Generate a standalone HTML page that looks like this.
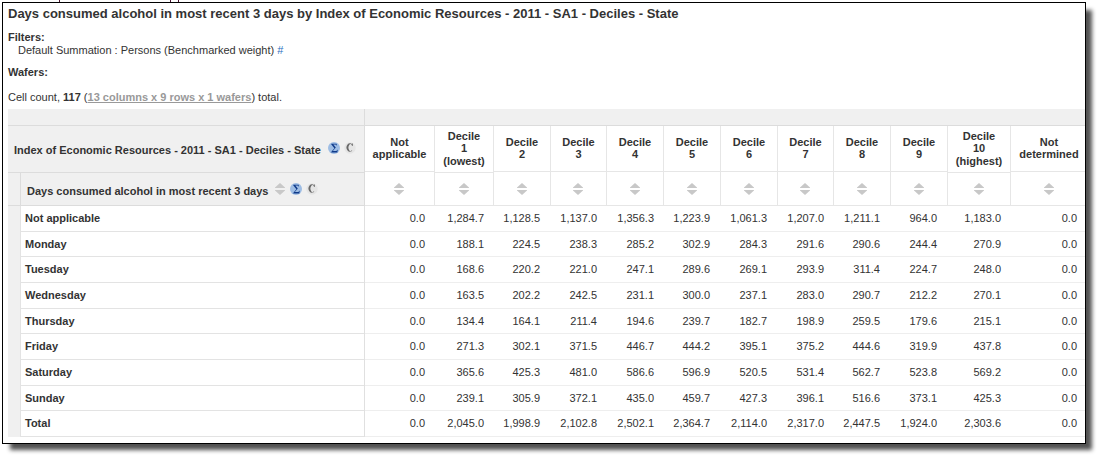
<!DOCTYPE html>
<html><head><meta charset="utf-8"><style>
html,body{margin:0;padding:0;background:#fff;width:1099px;height:456px;overflow:hidden;position:relative}
body div{position:absolute}
#shadow{left:10px;top:10px;width:1081.5px;height:439.5px;background:rgba(0,0,0,0.68);filter:blur(2.3px)}
#frame{left:2px;top:2px;width:1082px;height:440px;border:1px solid #000;background:#fff;}
.t13{font:bold 13px/15px "Liberation Sans",sans-serif;color:#333;white-space:nowrap}
.t11,.t11b,.hd,.num{font:11px/12px "Liberation Sans",sans-serif;color:#333333;white-space:nowrap}
.t11b,.hd{font-weight:bold}
.hd{text-align:center}
.num{text-align:right}
.lnk{color:#2a6fc0}
.gl{color:#999;font-weight:bold;text-decoration:underline}
.ic svg{display:block}
.l3{position:relative;top:1px}
</style></head><body>
<div style="left:59px;top:0px;width:1px;height:2px;background:#4a1030;"></div>
<div style="left:170px;top:0px;width:1px;height:2px;background:#4a1030;"></div>
<div style="left:178px;top:0px;width:1px;height:2px;background:#4a1030;"></div>
<div id="shadow"></div><div id="frame"></div>
<div class="t13" style="left:8px;top:6px;">Days consumed alcohol in most recent 3 days by Index of Economic Resources - 2011 - SA1 - Deciles - State</div>
<div class="t11b" style="left:8px;top:31px;">Filters:</div>
<div class="t11" style="left:18px;top:44px;">Default Summation : Persons (Benchmarked weight) <span class="lnk">#</span></div>
<div class="t11b" style="left:8px;top:66px;">Wafers:</div>
<div class="t11" style="left:8px;top:91px;">Cell count, <b>117</b> (<span class="gl">13 columns x 9 rows x 1 wafers</span>) total.</div>
<div style="left:8px;top:109px;width:1077px;height:328px;background:#f0f0f0;"></div>
<div style="left:365px;top:126px;width:720px;height:79px;background:#ffffff;"></div>
<div style="left:21px;top:206px;width:1064px;height:230px;background:#ffffff;"></div>
<div style="left:8px;top:125px;width:1077px;height:1px;background:#dcdcdc;"></div>
<div style="left:364px;top:109px;width:1px;height:97px;background:#dcdcdc;"></div>
<div style="left:364px;top:206px;width:1px;height:231px;background:#e0e0e0;"></div>
<div style="left:8px;top:172px;width:356px;height:1px;background:#dcdcdc;"></div>
<div style="left:20px;top:173px;width:1px;height:33px;background:#dcdcdc;"></div>
<div style="left:20px;top:206px;width:1px;height:231px;background:#e3e3e3;"></div>
<div style="left:8px;top:205px;width:356px;height:1px;background:#dcdcdc;"></div>
<div style="left:365px;top:205px;width:720px;height:1px;background:#e6e6e6;"></div>
<div style="left:21px;top:231px;width:343px;height:1px;background:#e3e3e3;"></div>
<div style="left:365px;top:231px;width:720px;height:1px;background:#eeeeee;"></div>
<div style="left:21px;top:256px;width:343px;height:1px;background:#e3e3e3;"></div>
<div style="left:365px;top:256px;width:720px;height:1px;background:#eeeeee;"></div>
<div style="left:21px;top:282px;width:343px;height:1px;background:#e3e3e3;"></div>
<div style="left:365px;top:282px;width:720px;height:1px;background:#eeeeee;"></div>
<div style="left:21px;top:308px;width:343px;height:1px;background:#e3e3e3;"></div>
<div style="left:365px;top:308px;width:720px;height:1px;background:#eeeeee;"></div>
<div style="left:21px;top:333px;width:343px;height:1px;background:#e3e3e3;"></div>
<div style="left:365px;top:333px;width:720px;height:1px;background:#eeeeee;"></div>
<div style="left:21px;top:359px;width:343px;height:1px;background:#e3e3e3;"></div>
<div style="left:365px;top:359px;width:720px;height:1px;background:#eeeeee;"></div>
<div style="left:21px;top:385px;width:343px;height:1px;background:#e3e3e3;"></div>
<div style="left:365px;top:385px;width:720px;height:1px;background:#eeeeee;"></div>
<div style="left:21px;top:410px;width:343px;height:1px;background:#e3e3e3;"></div>
<div style="left:365px;top:410px;width:720px;height:1px;background:#eeeeee;"></div>
<div style="left:21px;top:436px;width:343px;height:1px;background:#e3e3e3;"></div>
<div style="left:365px;top:436px;width:720px;height:1px;background:#eeeeee;"></div>
<div style="left:434px;top:126px;width:1px;height:79px;background:#e6e6e6;"></div>
<div style="left:493px;top:126px;width:1px;height:79px;background:#e6e6e6;"></div>
<div style="left:550px;top:126px;width:1px;height:79px;background:#e6e6e6;"></div>
<div style="left:606px;top:126px;width:1px;height:79px;background:#e6e6e6;"></div>
<div style="left:663px;top:126px;width:1px;height:79px;background:#e6e6e6;"></div>
<div style="left:720px;top:126px;width:1px;height:79px;background:#e6e6e6;"></div>
<div style="left:777px;top:126px;width:1px;height:79px;background:#e6e6e6;"></div>
<div style="left:833px;top:126px;width:1px;height:79px;background:#e6e6e6;"></div>
<div style="left:890px;top:126px;width:1px;height:79px;background:#e6e6e6;"></div>
<div style="left:947px;top:126px;width:1px;height:79px;background:#e6e6e6;"></div>
<div style="left:1010px;top:126px;width:1px;height:79px;background:#e6e6e6;"></div>
<div style="left:365px;top:171px;width:69px;height:1px;background:#e6e6e6;"></div>
<div style="left:435px;top:172px;width:58px;height:1px;background:#e6e6e6;"></div>
<div style="left:494px;top:171px;width:56px;height:1px;background:#e6e6e6;"></div>
<div style="left:551px;top:171px;width:55px;height:1px;background:#e6e6e6;"></div>
<div style="left:607px;top:171px;width:56px;height:1px;background:#e6e6e6;"></div>
<div style="left:664px;top:171px;width:56px;height:1px;background:#e6e6e6;"></div>
<div style="left:721px;top:171px;width:56px;height:1px;background:#e6e6e6;"></div>
<div style="left:778px;top:171px;width:55px;height:1px;background:#e6e6e6;"></div>
<div style="left:834px;top:171px;width:56px;height:1px;background:#e6e6e6;"></div>
<div style="left:891px;top:171px;width:56px;height:1px;background:#e6e6e6;"></div>
<div style="left:948px;top:172px;width:62px;height:1px;background:#e6e6e6;"></div>
<div style="left:1011px;top:171px;width:74px;height:1px;background:#e6e6e6;"></div>
<div class="t11b" style="left:14px;top:144px;">Index of Economic Resources - 2011 - SA1 - Deciles - State</div>
<div class="t11b" style="left:27px;top:185px;">Days consumed alcohol in most recent 3 days</div>
<div class="ic" style="left:328px;top:142px"><svg width="12" height="12" viewBox="0 0 12 12"><circle cx="6" cy="6" r="6" fill="#9ebde4"/><path d="M3.2,1.8 H8.6 L8.9,3.6 H8.5 Q8.2,2.5 7.2,2.5 H5.3 L7.8,5.6 L4.8,9.1 H7.9 Q8.9,9.1 9.3,7.8 H9.7 L9.3,10.4 H3.2 V10 L6.4,6.2 L3.2,2.3 Z" fill="#0f3a8a"/></svg></div>
<div class="ic" style="left:344px;top:142px"><svg width="12" height="12" viewBox="0 0 12 12"><circle cx="6" cy="6" r="5.7" fill="#e5e5e5"/><path d="M8.23,2.55 A3.3,4.25 0 1 0 8.23,8.55 L7.91,7.95 A2,3.4 0 1 1 7.91,3.15 Z" fill="#686868"/><rect x="7.9" y="1.5" width="0.9" height="2.4" fill="#686868"/></svg></div>
<div class="ic" style="left:275px;top:183px"><svg width="10" height="12" viewBox="0 0 10 12"><polygon points="0,4.6 5,0 10,4.6 10,5 0,5" fill="#c8c8c8"/><polygon points="0,7 10,7 10,7.4 5,12 0,7.4" fill="#c8c8c8"/></svg></div>
<div class="ic" style="left:290px;top:183px"><svg width="12" height="12" viewBox="0 0 12 12"><circle cx="6" cy="6" r="6" fill="#9ebde4"/><path d="M3.2,1.8 H8.6 L8.9,3.6 H8.5 Q8.2,2.5 7.2,2.5 H5.3 L7.8,5.6 L4.8,9.1 H7.9 Q8.9,9.1 9.3,7.8 H9.7 L9.3,10.4 H3.2 V10 L6.4,6.2 L3.2,2.3 Z" fill="#0f3a8a"/></svg></div>
<div class="ic" style="left:306px;top:183px"><svg width="12" height="12" viewBox="0 0 12 12"><circle cx="6" cy="6" r="5.7" fill="#e5e5e5"/><path d="M8.23,2.55 A3.3,4.25 0 1 0 8.23,8.55 L7.91,7.95 A2,3.4 0 1 1 7.91,3.15 Z" fill="#686868"/><rect x="7.9" y="1.5" width="0.9" height="2.4" fill="#686868"/></svg></div>
<div class="hd" style="left:365px;top:136px;width:69px">Not<br>applicable</div>
<div class="ic" style="left:394px;top:183px"><svg width="10" height="12" viewBox="0 0 10 12"><polygon points="0,4.6 5,0 10,4.6 10,5 0,5" fill="#c8c8c8"/><polygon points="0,7 10,7 10,7.4 5,12 0,7.4" fill="#c8c8c8"/></svg></div>
<div class="hd" style="left:435px;top:130px;width:58px">Decile<br>1<br><span class=l3>(lowest)</span></div>
<div class="ic" style="left:459px;top:183px"><svg width="10" height="12" viewBox="0 0 10 12"><polygon points="0,4.6 5,0 10,4.6 10,5 0,5" fill="#c8c8c8"/><polygon points="0,7 10,7 10,7.4 5,12 0,7.4" fill="#c8c8c8"/></svg></div>
<div class="hd" style="left:494px;top:136px;width:56px">Decile<br>2</div>
<div class="ic" style="left:517px;top:183px"><svg width="10" height="12" viewBox="0 0 10 12"><polygon points="0,4.6 5,0 10,4.6 10,5 0,5" fill="#c8c8c8"/><polygon points="0,7 10,7 10,7.4 5,12 0,7.4" fill="#c8c8c8"/></svg></div>
<div class="hd" style="left:551px;top:136px;width:55px">Decile<br>3</div>
<div class="ic" style="left:573px;top:183px"><svg width="10" height="12" viewBox="0 0 10 12"><polygon points="0,4.6 5,0 10,4.6 10,5 0,5" fill="#c8c8c8"/><polygon points="0,7 10,7 10,7.4 5,12 0,7.4" fill="#c8c8c8"/></svg></div>
<div class="hd" style="left:607px;top:136px;width:56px">Decile<br>4</div>
<div class="ic" style="left:630px;top:183px"><svg width="10" height="12" viewBox="0 0 10 12"><polygon points="0,4.6 5,0 10,4.6 10,5 0,5" fill="#c8c8c8"/><polygon points="0,7 10,7 10,7.4 5,12 0,7.4" fill="#c8c8c8"/></svg></div>
<div class="hd" style="left:664px;top:136px;width:56px">Decile<br>5</div>
<div class="ic" style="left:687px;top:183px"><svg width="10" height="12" viewBox="0 0 10 12"><polygon points="0,4.6 5,0 10,4.6 10,5 0,5" fill="#c8c8c8"/><polygon points="0,7 10,7 10,7.4 5,12 0,7.4" fill="#c8c8c8"/></svg></div>
<div class="hd" style="left:721px;top:136px;width:56px">Decile<br>6</div>
<div class="ic" style="left:744px;top:183px"><svg width="10" height="12" viewBox="0 0 10 12"><polygon points="0,4.6 5,0 10,4.6 10,5 0,5" fill="#c8c8c8"/><polygon points="0,7 10,7 10,7.4 5,12 0,7.4" fill="#c8c8c8"/></svg></div>
<div class="hd" style="left:778px;top:136px;width:55px">Decile<br>7</div>
<div class="ic" style="left:800px;top:183px"><svg width="10" height="12" viewBox="0 0 10 12"><polygon points="0,4.6 5,0 10,4.6 10,5 0,5" fill="#c8c8c8"/><polygon points="0,7 10,7 10,7.4 5,12 0,7.4" fill="#c8c8c8"/></svg></div>
<div class="hd" style="left:834px;top:136px;width:56px">Decile<br>8</div>
<div class="ic" style="left:857px;top:183px"><svg width="10" height="12" viewBox="0 0 10 12"><polygon points="0,4.6 5,0 10,4.6 10,5 0,5" fill="#c8c8c8"/><polygon points="0,7 10,7 10,7.4 5,12 0,7.4" fill="#c8c8c8"/></svg></div>
<div class="hd" style="left:891px;top:136px;width:56px">Decile<br>9</div>
<div class="ic" style="left:914px;top:183px"><svg width="10" height="12" viewBox="0 0 10 12"><polygon points="0,4.6 5,0 10,4.6 10,5 0,5" fill="#c8c8c8"/><polygon points="0,7 10,7 10,7.4 5,12 0,7.4" fill="#c8c8c8"/></svg></div>
<div class="hd" style="left:948px;top:130px;width:62px">Decile<br>10<br><span class=l3>(highest)</span></div>
<div class="ic" style="left:974px;top:183px"><svg width="10" height="12" viewBox="0 0 10 12"><polygon points="0,4.6 5,0 10,4.6 10,5 0,5" fill="#c8c8c8"/><polygon points="0,7 10,7 10,7.4 5,12 0,7.4" fill="#c8c8c8"/></svg></div>
<div class="hd" style="left:1012px;top:136px;width:74px">Not<br>determined</div>
<div class="ic" style="left:1044px;top:183px"><svg width="10" height="12" viewBox="0 0 10 12"><polygon points="0,4.6 5,0 10,4.6 10,5 0,5" fill="#c8c8c8"/><polygon points="0,7 10,7 10,7.4 5,12 0,7.4" fill="#c8c8c8"/></svg></div>
<div class="t11b" style="left:25px;top:212px;">Not applicable</div>
<div class="num" style="left:365px;top:212px;width:60px">0.0</div>
<div class="num" style="left:435px;top:212px;width:49px">1,284.7</div>
<div class="num" style="left:494px;top:212px;width:46px">1,128.5</div>
<div class="num" style="left:551px;top:212px;width:46px">1,137.0</div>
<div class="num" style="left:607px;top:212px;width:47px">1,356.3</div>
<div class="num" style="left:664px;top:212px;width:46px">1,223.9</div>
<div class="num" style="left:721px;top:212px;width:46px">1,061.3</div>
<div class="num" style="left:778px;top:212px;width:46px">1,207.0</div>
<div class="num" style="left:834px;top:212px;width:46px">1,211.1</div>
<div class="num" style="left:891px;top:212px;width:46px">964.0</div>
<div class="num" style="left:948px;top:212px;width:53px">1,183.0</div>
<div class="num" style="left:1011px;top:212px;width:66px">0.0</div>
<div class="t11b" style="left:25px;top:238px;">Monday</div>
<div class="num" style="left:365px;top:238px;width:60px">0.0</div>
<div class="num" style="left:435px;top:238px;width:49px">188.1</div>
<div class="num" style="left:494px;top:238px;width:46px">224.5</div>
<div class="num" style="left:551px;top:238px;width:46px">238.3</div>
<div class="num" style="left:607px;top:238px;width:47px">285.2</div>
<div class="num" style="left:664px;top:238px;width:46px">302.9</div>
<div class="num" style="left:721px;top:238px;width:46px">284.3</div>
<div class="num" style="left:778px;top:238px;width:46px">291.6</div>
<div class="num" style="left:834px;top:238px;width:46px">290.6</div>
<div class="num" style="left:891px;top:238px;width:46px">244.4</div>
<div class="num" style="left:948px;top:238px;width:53px">270.9</div>
<div class="num" style="left:1011px;top:238px;width:66px">0.0</div>
<div class="t11b" style="left:25px;top:263px;">Tuesday</div>
<div class="num" style="left:365px;top:263px;width:60px">0.0</div>
<div class="num" style="left:435px;top:263px;width:49px">168.6</div>
<div class="num" style="left:494px;top:263px;width:46px">220.2</div>
<div class="num" style="left:551px;top:263px;width:46px">221.0</div>
<div class="num" style="left:607px;top:263px;width:47px">247.1</div>
<div class="num" style="left:664px;top:263px;width:46px">289.6</div>
<div class="num" style="left:721px;top:263px;width:46px">269.1</div>
<div class="num" style="left:778px;top:263px;width:46px">293.9</div>
<div class="num" style="left:834px;top:263px;width:46px">311.4</div>
<div class="num" style="left:891px;top:263px;width:46px">224.7</div>
<div class="num" style="left:948px;top:263px;width:53px">248.0</div>
<div class="num" style="left:1011px;top:263px;width:66px">0.0</div>
<div class="t11b" style="left:25px;top:289px;">Wednesday</div>
<div class="num" style="left:365px;top:289px;width:60px">0.0</div>
<div class="num" style="left:435px;top:289px;width:49px">163.5</div>
<div class="num" style="left:494px;top:289px;width:46px">202.2</div>
<div class="num" style="left:551px;top:289px;width:46px">242.5</div>
<div class="num" style="left:607px;top:289px;width:47px">231.1</div>
<div class="num" style="left:664px;top:289px;width:46px">300.0</div>
<div class="num" style="left:721px;top:289px;width:46px">237.1</div>
<div class="num" style="left:778px;top:289px;width:46px">283.0</div>
<div class="num" style="left:834px;top:289px;width:46px">290.7</div>
<div class="num" style="left:891px;top:289px;width:46px">212.2</div>
<div class="num" style="left:948px;top:289px;width:53px">270.1</div>
<div class="num" style="left:1011px;top:289px;width:66px">0.0</div>
<div class="t11b" style="left:25px;top:315px;">Thursday</div>
<div class="num" style="left:365px;top:315px;width:60px">0.0</div>
<div class="num" style="left:435px;top:315px;width:49px">134.4</div>
<div class="num" style="left:494px;top:315px;width:46px">164.1</div>
<div class="num" style="left:551px;top:315px;width:46px">211.4</div>
<div class="num" style="left:607px;top:315px;width:47px">194.6</div>
<div class="num" style="left:664px;top:315px;width:46px">239.7</div>
<div class="num" style="left:721px;top:315px;width:46px">182.7</div>
<div class="num" style="left:778px;top:315px;width:46px">198.9</div>
<div class="num" style="left:834px;top:315px;width:46px">259.5</div>
<div class="num" style="left:891px;top:315px;width:46px">179.6</div>
<div class="num" style="left:948px;top:315px;width:53px">215.1</div>
<div class="num" style="left:1011px;top:315px;width:66px">0.0</div>
<div class="t11b" style="left:25px;top:340px;">Friday</div>
<div class="num" style="left:365px;top:340px;width:60px">0.0</div>
<div class="num" style="left:435px;top:340px;width:49px">271.3</div>
<div class="num" style="left:494px;top:340px;width:46px">302.1</div>
<div class="num" style="left:551px;top:340px;width:46px">371.5</div>
<div class="num" style="left:607px;top:340px;width:47px">446.7</div>
<div class="num" style="left:664px;top:340px;width:46px">444.2</div>
<div class="num" style="left:721px;top:340px;width:46px">395.1</div>
<div class="num" style="left:778px;top:340px;width:46px">375.2</div>
<div class="num" style="left:834px;top:340px;width:46px">444.6</div>
<div class="num" style="left:891px;top:340px;width:46px">319.9</div>
<div class="num" style="left:948px;top:340px;width:53px">437.8</div>
<div class="num" style="left:1011px;top:340px;width:66px">0.0</div>
<div class="t11b" style="left:25px;top:366px;">Saturday</div>
<div class="num" style="left:365px;top:366px;width:60px">0.0</div>
<div class="num" style="left:435px;top:366px;width:49px">365.6</div>
<div class="num" style="left:494px;top:366px;width:46px">425.3</div>
<div class="num" style="left:551px;top:366px;width:46px">481.0</div>
<div class="num" style="left:607px;top:366px;width:47px">586.6</div>
<div class="num" style="left:664px;top:366px;width:46px">596.9</div>
<div class="num" style="left:721px;top:366px;width:46px">520.5</div>
<div class="num" style="left:778px;top:366px;width:46px">531.4</div>
<div class="num" style="left:834px;top:366px;width:46px">562.7</div>
<div class="num" style="left:891px;top:366px;width:46px">523.8</div>
<div class="num" style="left:948px;top:366px;width:53px">569.2</div>
<div class="num" style="left:1011px;top:366px;width:66px">0.0</div>
<div class="t11b" style="left:25px;top:392px;">Sunday</div>
<div class="num" style="left:365px;top:392px;width:60px">0.0</div>
<div class="num" style="left:435px;top:392px;width:49px">239.1</div>
<div class="num" style="left:494px;top:392px;width:46px">305.9</div>
<div class="num" style="left:551px;top:392px;width:46px">372.1</div>
<div class="num" style="left:607px;top:392px;width:47px">435.0</div>
<div class="num" style="left:664px;top:392px;width:46px">459.7</div>
<div class="num" style="left:721px;top:392px;width:46px">427.3</div>
<div class="num" style="left:778px;top:392px;width:46px">396.1</div>
<div class="num" style="left:834px;top:392px;width:46px">516.6</div>
<div class="num" style="left:891px;top:392px;width:46px">373.1</div>
<div class="num" style="left:948px;top:392px;width:53px">425.3</div>
<div class="num" style="left:1011px;top:392px;width:66px">0.0</div>
<div class="t11b" style="left:25px;top:417px;">Total</div>
<div class="num" style="left:365px;top:417px;width:60px">0.0</div>
<div class="num" style="left:435px;top:417px;width:49px">2,045.0</div>
<div class="num" style="left:494px;top:417px;width:46px">1,998.9</div>
<div class="num" style="left:551px;top:417px;width:46px">2,102.8</div>
<div class="num" style="left:607px;top:417px;width:47px">2,502.1</div>
<div class="num" style="left:664px;top:417px;width:46px">2,364.7</div>
<div class="num" style="left:721px;top:417px;width:46px">2,114.0</div>
<div class="num" style="left:778px;top:417px;width:46px">2,317.0</div>
<div class="num" style="left:834px;top:417px;width:46px">2,447.5</div>
<div class="num" style="left:891px;top:417px;width:46px">1,924.0</div>
<div class="num" style="left:948px;top:417px;width:53px">2,303.6</div>
<div class="num" style="left:1011px;top:417px;width:66px">0.0</div>
</body></html>
